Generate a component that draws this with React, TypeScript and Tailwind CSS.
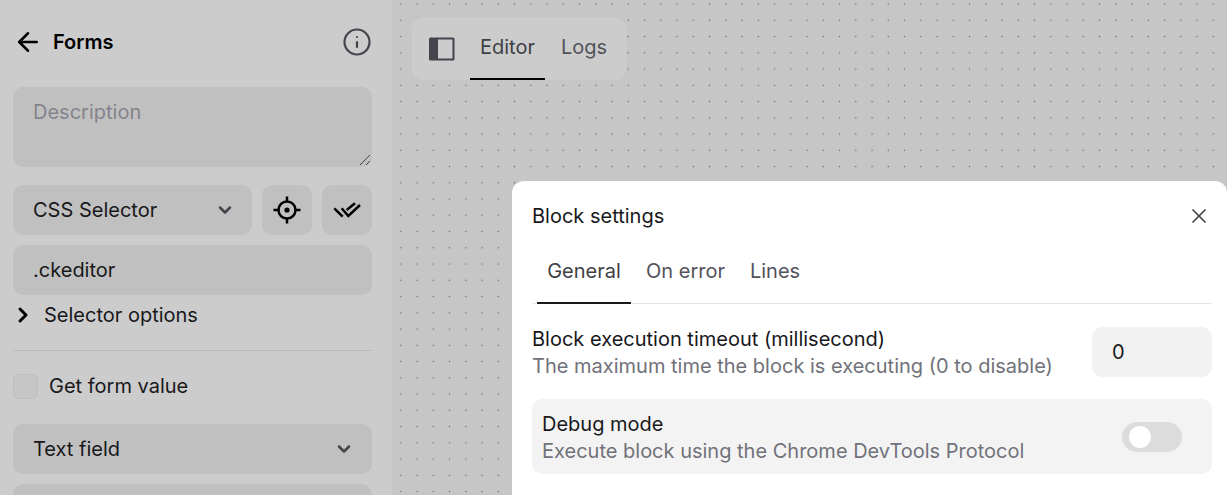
import { ArrowLeft, ChevronDown, ChevronRight, Info, X } from "lucide-react";

function Crosshair() {
  return (
    <svg viewBox="0 0 28 28" width={28} height={28} fill="none" stroke="currentColor" strokeWidth={2.5}>
      <circle cx="14" cy="14" r="8.5" />
      <circle cx="14" cy="14" r="2.6" fill="currentColor" stroke="none" />
      <path d="M14 0.5v5M14 22.5v5M0.5 14h5M22.5 14h5" />
    </svg>
  );
}

function DoubleCheck() {
  return (
    <svg viewBox="0 0 30 30" width={30} height={30} fill="none" stroke="currentColor" strokeWidth={2.5}>
      <path d="M2.3 13.3l8.4 8.4" />
      <path d="M9.7 13.3l6.6 7.7L28 10" />
      <path d="M14.7 15L23 8.3" />
    </svg>
  );
}

function SidebarPanelIcon() {
  return (
    <svg viewBox="0 0 26 24" width={26} height={24}>
      <rect x="0" y="0.5" width="25.5" height="23" rx="1.5" fill="#44444c" />
      <rect x="9" y="2.5" width="14.5" height="19" fill="#cccccc" />
    </svg>
  );
}

function Sidebar() {
  return (
    <aside className="flex w-[392px] shrink-0 flex-col bg-[#cccccc] pl-[13px] pr-[20px]">
      <div className="mt-[26px] flex h-[32px] shrink-0 items-center">
        <ArrowLeft size={30} className="text-black" strokeWidth={2} />
        <span className="ml-[10px] text-[20px] font-semibold text-black">Forms</span>
        <Info size={30} className="ml-auto text-[#44444c]" strokeWidth={1.75} />
      </div>

      <div className="relative mt-[29px] h-[80px] shrink-0 rounded-[10px] bg-[#c0c0c0] px-[20px] py-[10px] text-[20px] text-[#84848c]">
        Description
        <svg viewBox="0 0 12 12" width={12} height={12} className="absolute bottom-[1px] right-[1px] text-[#44444c]" stroke="currentColor" fill="none">
          <path d="M1 11L11 1M7 11l4-4" />
        </svg>
      </div>

      <div className="mt-[18px] flex shrink-0 gap-[10px]">
        <div className="flex h-[50px] w-[239px] items-center justify-between rounded-[10px] bg-[#c0c0c0] pl-[20px] pr-[17px] text-[20px] text-[#18181b]">
          CSS Selector
          <ChevronDown size={20} strokeWidth={3} className="text-[#44444c]" />
        </div>
        <div className="flex h-[50px] w-[50px] items-center justify-center rounded-[10px] bg-[#c0c0c0] text-black">
          <Crosshair />
        </div>
        <div className="flex h-[50px] w-[50px] items-center justify-center rounded-[10px] bg-[#c0c0c0] text-black">
          <DoubleCheck />
        </div>
      </div>

      <div className="mt-[10px] flex h-[50px] shrink-0 items-center rounded-[10px] bg-[#c0c0c0] px-[20px] text-[20px] text-[#18181b]">
        .ckeditor
      </div>

      <div className="mt-[6px] flex h-[28px] shrink-0 items-center text-[20px] text-[#18181b]">
        <ChevronRight size={24} strokeWidth={3} className="ml-[-2px] text-black" />
        <span className="ml-[9px]">Selector options</span>
      </div>

      <div className="mt-[21px] h-px shrink-0 bg-[#bababa]" />

      <div className="mt-[23px] flex h-[25px] shrink-0 items-center text-[20px] text-[#18181b]">
        <span className="h-[25px] w-[25px] rounded-[5px] border border-[#bfbfbf] bg-[#c6c6c6]" />
        <span className="ml-[11px] mt-[-1px]">Get form value</span>
      </div>

      <div className="mt-[25px] flex h-[50px] shrink-0 items-center justify-between rounded-[10px] bg-[#c0c0c0] pl-[20px] pr-[18px] text-[20px] text-[#18181b]">
        Text field
        <ChevronDown size={20} strokeWidth={3} className="text-[#44444c]" />
      </div>

      <div className="mt-[10px] h-[50px] shrink-0 rounded-[10px] bg-[#c0c0c0]" />
    </aside>
  );
}

function BlockSettings() {
  return (
    <div className="absolute left-[512px] top-[181px] w-[715px] rounded-[12px] bg-white pl-[20px] pr-[15px] pt-[20px] pb-[40px]">
      <div className="flex h-[30px] items-center justify-between text-[20px] text-[#18181b]">
        Block settings
        <X size={24} strokeWidth={1.75} className="mr-[1px] text-[#44444c]" />
      </div>

      <div className="mt-[10px] flex h-[63px] border-b border-[#e5e5e5] pl-[5px] text-[20px] text-[#52525b]">
        <div className="flex h-[63px] w-[94px] items-center justify-center border-b-2 border-[#18181b] pb-[1px] text-[#3f3f46]">
          General
        </div>
        <div className="flex h-[63px] items-center pb-[3px] pl-[15px]">On error</div>
        <div className="flex h-[63px] items-center pb-[3px] pl-[25px]">Lines</div>
      </div>

      <div className="mt-[20px] flex h-[56px] items-center justify-between">
        <div className="pt-[1px] leading-[27px]">
          <p className="text-[20px] text-[#18181b]">Block execution timeout (millisecond)</p>
          <p className="text-[20px] text-[#71717a]">The maximum time the block is executing (0 to disable)</p>
        </div>
        <div className="flex h-[50px] w-[120px] items-center rounded-[10px] bg-[#f2f2f2] px-[20px] text-[20px] text-[#18181b]">
          0
        </div>
      </div>

      <div className="mt-[19px] flex h-[75px] items-center justify-between rounded-[10px] bg-[#f3f3f3] pl-[10px] pr-[30px]">
        <div className="pt-[2px] leading-[27px]">
          <p className="text-[20px] text-[#18181b]">Debug mode</p>
          <p className="text-[20px] text-[#71717a]">Execute block using the Chrome DevTools Protocol</p>
        </div>
        <div className="flex h-[30px] w-[60px] items-center rounded-full bg-[#dcdcdc] pl-[7px]">
          <span className="h-[22px] w-[22px] rounded-full bg-white" />
        </div>
      </div>
    </div>
  );
}

export default function App() {
  return (
    <div className="relative flex h-[495px] w-[1227px] overflow-hidden font-['Inter',sans-serif]">
      <Sidebar />
      <main className="flex-1 bg-[#c6c6c6] bg-[radial-gradient(circle,#707070_0.8px,transparent_1px)] bg-[length:16.25px_16.25px] bg-[position:0.7px_-4.1px] pl-[20px] pt-[17px]">
        <div className="flex h-[63px] w-[214px] items-stretch rounded-[12px] bg-[#cccccc] pl-[17px]">
          <div className="flex items-center">
            <SidebarPanelIcon />
          </div>
          <div className="ml-[15px] flex h-[63px] w-[75px] items-center justify-center border-b-2 border-black pb-[1px] text-[20px] text-[#3f3f46]">
            Editor
          </div>
          <div className="ml-[16px] flex items-center pb-[3px] text-[20px] text-[#52525b]">Logs</div>
        </div>
      </main>
      <BlockSettings />
    </div>
  );
}
